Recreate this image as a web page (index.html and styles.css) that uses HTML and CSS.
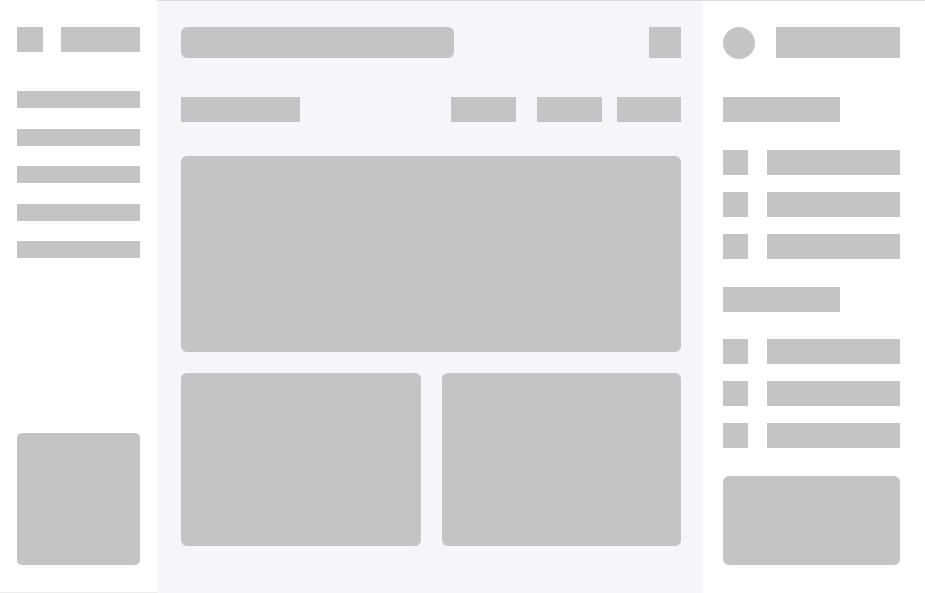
FILE: index.html
```html
<!DOCTYPE html>
<html lang="en">
<head>
<meta charset="utf-8">
<title>Wireframe</title>
<link rel="stylesheet" href="styles.css">
</head>
<body>
<div class="app">
  <aside class="sidebar">
    <div class="brand">
      <div class="sk brand-icon"></div>
      <div class="sk brand-name"></div>
    </div>
    <nav class="nav">
      <div class="sk nav-item"></div>
      <div class="sk nav-item"></div>
      <div class="sk nav-item"></div>
      <div class="sk nav-item"></div>
      <div class="sk nav-item"></div>
    </nav>
    <div class="sk sidebar-card"></div>
  </aside>

  <main class="main">
    <div class="topbar">
      <div class="sk search"></div>
      <div class="sk icon-btn"></div>
    </div>
    <div class="toolbar">
      <div class="sk page-title"></div>
      <div class="tabs">
        <div class="sk tab"></div>
        <div class="sk tab tab-2"></div>
        <div class="sk tab tab-3"></div>
      </div>
    </div>
    <div class="sk hero"></div>
    <div class="cards">
      <div class="sk card"></div>
      <div class="sk card"></div>
    </div>
  </main>

  <aside class="panel">
    <div class="profile">
      <div class="sk avatar"></div>
      <div class="sk profile-name"></div>
    </div>
    <div class="sk section-title"></div>
    <ul class="list">
      <li class="row"><div class="sk row-icon"></div><div class="sk row-text"></div></li>
      <li class="row"><div class="sk row-icon"></div><div class="sk row-text"></div></li>
      <li class="row"><div class="sk row-icon"></div><div class="sk row-text"></div></li>
    </ul>
    <div class="sk section-title second"></div>
    <ul class="list list-2">
      <li class="row"><div class="sk row-icon"></div><div class="sk row-text"></div></li>
      <li class="row"><div class="sk row-icon"></div><div class="sk row-text"></div></li>
      <li class="row"><div class="sk row-icon"></div><div class="sk row-text"></div></li>
    </ul>
    <div class="sk panel-card"></div>
  </aside>
</div>
</body>
</html>
```

FILE: styles.css
```css
* { box-sizing: border-box; }

html, body {
  margin: 0;
  padding: 0;
  background: #ffffff;
  font-family: "Liberation Sans", Arial, sans-serif;
}

.app {
  display: flex;
  width: 925px;
  height: 593px;
  overflow: hidden;
}

.sk { background: #c4c4c4; }

/* Left sidebar */
.sidebar {
  width: 157px;
  flex: none;
  display: flex;
  flex-direction: column;
  padding: 27px 17px 27px 17px;
  background: #ffffff;
  border-bottom: 1px solid #ececec;
}
.brand {
  display: flex;
  gap: 18px;
  height: 25px;
}
.brand-icon { width: 26px; height: 25px; }
.brand-name { width: 79px; height: 25px; }
.nav {
  display: flex;
  flex-direction: column;
  gap: 20.5px;
  margin-top: 39px;
}
.nav-item { width: 123px; height: 17px; }
.sidebar-card {
  margin-top: auto;
  width: 123px;
  height: 132px;
  border-radius: 5px;
}

/* Main */
.main {
  width: 546px;
  flex: none;
  background: #f5f5fa;
  padding: 26px 22px 0 24px;
  border-top: 1px solid #dcdcdc;
  display: flex;
  flex-direction: column;
}
.topbar {
  display: flex;
  justify-content: space-between;
  height: 31px;
}
.search { width: 273px; height: 31px; border-radius: 6px; }
.icon-btn { width: 32px; height: 31px; }
.toolbar {
  display: flex;
  justify-content: space-between;
  margin-top: 39px;
  height: 25px;
}
.page-title { width: 119px; height: 25px; }
.tabs { display: flex; }
.tab { width: 65px; height: 25px; }
.tab-2 { margin-left: 21px; }
.tab-3 { margin-left: 15px; width: 64px; }
.hero {
  margin-top: 34px;
  height: 196px;
  border-radius: 6px;
}
.cards {
  display: grid;
  grid-template-columns: 240px 239px;
  gap: 21px;
  margin-top: 21px;
}
.card { height: 173px; border-radius: 6px; }

/* Right panel */
.panel {
  width: 222px;
  flex: none;
  background: #ffffff;
  padding: 26px 25px 0 20px;
  border-top: 1px solid #dcdcdc;
  display: flex;
  flex-direction: column;
}
.profile {
  display: flex;
  gap: 21px;
  height: 32px;
}
.avatar { width: 32px; height: 32px; border-radius: 50%; }
.profile-name { width: 124px; height: 31px; }
.section-title {
  width: 117px;
  height: 25px;
  margin-top: 38px;
}
.section-title.second { margin-top: 28px; }
.list {
  list-style: none;
  margin: 28px 0 0;
  padding: 0;
  display: flex;
  flex-direction: column;
  gap: 17px;
}
.list-2 { margin-top: 27px; }
.row { display: flex; gap: 19px; height: 25px; }
.row-icon { width: 25px; height: 25px; }
.row-text { width: 133px; height: 25px; }
.panel-card {
  margin-top: 28px;
  width: 177px;
  height: 89px;
  border-radius: 6px;
}
```
